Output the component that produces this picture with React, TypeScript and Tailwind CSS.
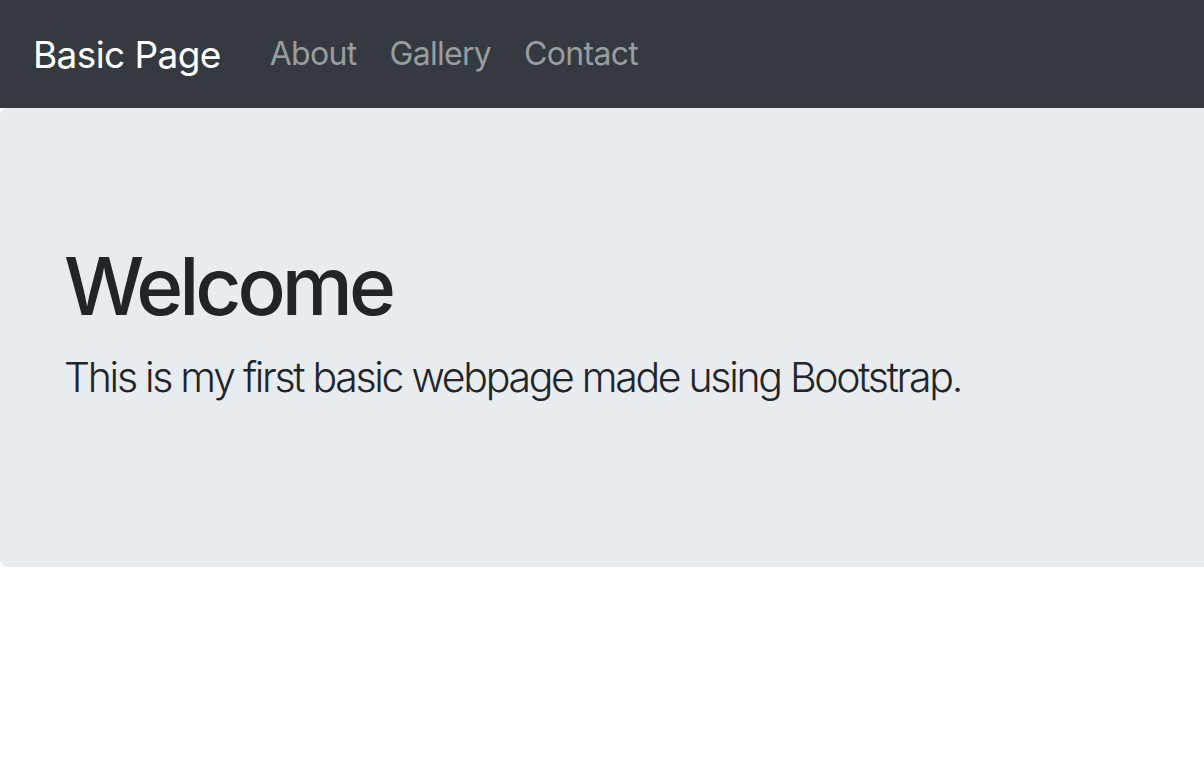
export default function App() {
  return (
    <div className="min-h-[776px] bg-white font-['Inter',sans-serif]">
      {/* Navbar */}
      <nav className="flex h-[108px] items-center bg-[#343a40] px-[33px]">
        <span className="mr-[49px] text-[37px] leading-none tracking-[-0.6px] text-white">Basic Page</span>
        <div className="flex gap-[33px] text-[32px] leading-none tracking-[-0.7px] text-[#9a9da0]">
          <a>About</a>
          <a>Gallery</a>
          <a>Contact</a>
        </div>
      </nav>

      {/* Jumbotron */}
      <div className="mr-[-20px] h-[459px] rounded-[8px] bg-[#e9ecef] px-[64px] pt-[138px]">
        <h1 className="text-[80px] font-medium leading-none tracking-[-4px] text-[#212529]">Welcome</h1>
        <p className="mt-[31px] text-[41px] font-light leading-none tracking-[-2.3px] text-[#212529]">
          This is my first basic webpage made using Bootstrap.
        </p>
      </div>
    </div>
  )
}
